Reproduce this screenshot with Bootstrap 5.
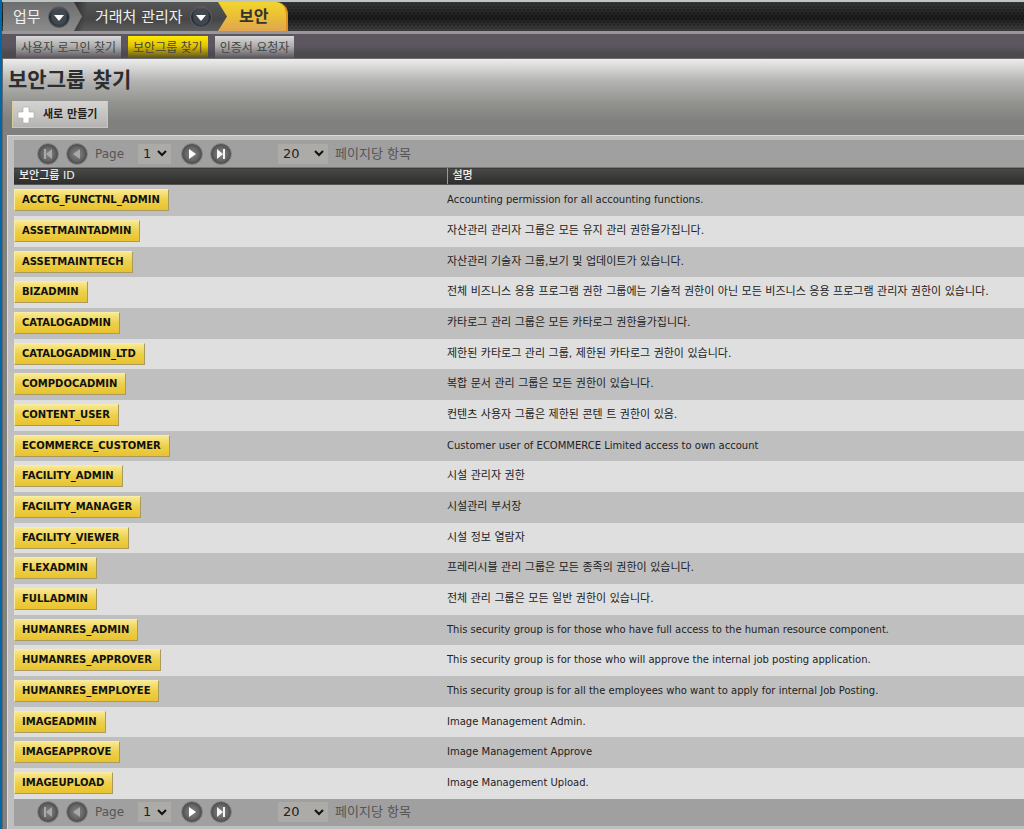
<!DOCTYPE html>
<html lang="ko">
<head>
<meta charset="utf-8">
<meta name="viewport" content="width=device-width, initial-scale=1">
<title>보안그룹 찾기</title>
<link rel="stylesheet" href="https://cdn.jsdelivr.net/npm/bootstrap@5.3.0/dist/css/bootstrap.min.css">
<style>
body{font-family:"DejaVu Sans","Noto Sans CJK KR",sans-serif;font-size:11px;line-height:16px;color:#222;border-left:2px solid #0068a8;background:#80807e}
a{text-decoration:none}
.appbar{height:34px;padding-left:1px;border-top:2px solid #bcc4c4;border-bottom:3px solid #98959b;
 background:linear-gradient(rgba(80,80,80,.4),rgba(10,10,10,.35) 55%,rgba(100,100,100,.4)),radial-gradient(circle at 2px 2px,#161616 1px,transparent 2px) 0 0/4px 6px,radial-gradient(circle at 2px 2px,#161616 1px,transparent 2px) 2px 3px/4px 6px,#333}
.crumb{color:#f0f0f0;font-size:15px;gap:7px;height:29px}
.crumb-home{z-index:3;width:79px;padding-left:10px;background:linear-gradient(#6d6d6d,#8b8b8b);clip-path:polygon(0 0,71px 0,100% 50%,71px 100%,0 100%)}
.crumb-app{z-index:2;margin-left:-8px;width:153px;padding-left:21px;background:linear-gradient(100deg,#2b2b2b,transparent 14px),linear-gradient(#555,#464646 60%,#5c5c5c);clip-path:polygon(0 0,144px 0,100% 50%,144px 100%,0 100%)}
.crumb-now{z-index:1;margin-left:-10px;width:71px;padding-left:22px;font-size:16px;font-weight:700;color:#333;background:linear-gradient(#f2d52e,#e9bc38 55%,#e0a552);border-right:2px solid #e0901c;border-radius:0 12px 0 0}
.crumb-now:hover{color:#333}
.roundbtn{width:22px;height:22px;padding:0;border:0;background:none;line-height:0;flex:none}
.tabstrip{height:25px;padding:2px 0 0 14px;gap:7px;background:linear-gradient(#5e565e,#5c5662 50%,#4d4a4e 80%,#4d4a4e);border-bottom:1px solid #6f6c70;font-family:"Noto Sans CJK KR",sans-serif;font-size:12px;line-height:20px}
.tabstrip a{padding:1px 5px 0;height:22px;color:#444;background:linear-gradient(#d8d8d8,#aaa 50%,#5b565c)}
.tabstrip a.active{background:linear-gradient(#ffea00,#e0c400 45%,#5d541f)}
.stage{background:linear-gradient(#ededed,#b4b4b2 22px,#92928f 44px,#80807e 62px);border-left:1px solid #666}
.stage h1{font-size:21px;line-height:26px;font-weight:700;color:#2d2d2d;padding:8px 0 0 5px;margin:0 0 8px}
.newbtn{margin-left:9px;width:96px;height:27px;border:1px solid #c9c7b8;border-top-color:#e0d690;border-left-color:#d8cf95;background:linear-gradient(#d4d3d1,#b5b4b3);gap:8px;padding:0 0 0 4px;font-weight:700;color:#222;font-size:11px}
.sheet{margin:7px 0 0 4px;padding:4px 0 5px 6px;background:#bfbfbf;border-top:1px solid #dcdcd2;border-left:1px solid #dcdcd2}
.pager{height:27px;padding-left:23px;gap:7px;background:#a0a0a0;color:#555;font-size:12px}
.pager select{appearance:none;height:20px;border:0;border-radius:0;padding:0 5px;font-size:13px;color:#222;background:#adaba8 url("data:image/svg+xml,%3Csvg xmlns='http://www.w3.org/2000/svg' width='10' height='7'%3E%3Cpath d='M1 1l4 4 4-4' fill='none' stroke='%23111' stroke-width='2'/%3E%3C/svg%3E") no-repeat right 4px center}
.pager .sel-page{width:33px;margin:0 3px 0 7px}
.pager .sel-size{width:50px;margin-left:39px}
.per-page{font-size:13px}
.groups{width:100%;table-layout:fixed;border-collapse:collapse}
.groups th{height:17px;padding:0 5px;line-height:14px;font-weight:500;color:#f0f0f0;background:linear-gradient(#494947,#2c2c2b);border-top:1px solid #777;border-bottom:1px solid #555}
.groups th:first-child{width:433px}
.groups th+th{border-left:1px solid #999}
.groups td{height:31px;padding:0}
.groups tbody tr:nth-child(3n) td{height:30px}
.groups tbody tr:nth-child(even){background:#dfdfdf}
.groups td:lang(en){font-size:10px}
.groups td a{display:inline-block;vertical-align:middle;height:22px;line-height:20px;padding:0 8px 0 7px;font-size:10px;font-weight:700;color:#111;background:linear-gradient(#f9e991,#edd04a 50%,#e9c32f);border:1px solid #f7eda5;border-right-color:#a99b60;border-bottom-color:#a99b60}
</style>
</head>
<body>
<svg width="0" height="0" class="position-absolute" aria-hidden="true">
 <radialGradient id="orb"><stop offset="0" stop-color="#858585"/><stop offset=".6" stop-color="#686868"/><stop offset=".9" stop-color="#505050"/><stop offset="1" stop-color="#666"/></radialGradient>
 <linearGradient id="ink" x1="0" y1="0" x2="0" y2="1"><stop offset="0" stop-color="#555a60"/><stop offset=".5" stop-color="#23282e"/><stop offset="1" stop-color="#3b4148"/></linearGradient>
 <symbol id="down" viewBox="0 0 22 22"><circle cx="11" cy="11" r="10.5" fill="url(#ink)" stroke="#5c6064"/><circle cx="11" cy="11" r="8" fill="#41484f"/><path d="M6 9h10l-5 6z" fill="#fff"/></symbol>
 <symbol id="first" viewBox="0 0 22 22"><circle cx="11" cy="11" r="10.5" fill="url(#orb)" stroke="#858585"/><path d="M7 6h2v10H7zM15 6v10l-6-5z" fill="#a9a9a9"/></symbol>
 <symbol id="prev" viewBox="0 0 22 22"><circle cx="11" cy="11" r="10.5" fill="url(#orb)" stroke="#858585"/><path d="M14 6v10l-7-5z" fill="#a9a9a9"/></symbol>
 <symbol id="next" viewBox="0 0 22 22"><circle cx="11" cy="11" r="10.5" fill="url(#orb)" stroke="#858585"/><path d="M8 6v10l7-5z" fill="#fff"/></symbol>
 <symbol id="last" viewBox="0 0 22 22"><circle cx="11" cy="11" r="10.5" fill="url(#orb)" stroke="#858585"/><path d="M7 6v10l6-5zM13 6h2v10h-2z" fill="#f4f4f4"/></symbol>
</svg>
<header>
 <nav class="appbar d-flex" aria-label="경로">
  <div class="crumb crumb-home d-flex align-items-center position-relative"><span>업무</span><button class="roundbtn" aria-label="업무 메뉴"><svg width="22" height="22"><use href="#down"/></svg></button></div>
  <div class="crumb crumb-app d-flex align-items-center position-relative"><span class="text-nowrap">거래처 관리자</span><button class="roundbtn" aria-label="거래처 메뉴"><svg width="22" height="22"><use href="#down"/></svg></button></div>
  <a href="#" class="crumb crumb-now d-flex align-items-center position-relative">보안</a>
 </nav>
 <nav class="tabstrip d-flex" aria-label="보안 메뉴"><a href="#">사용자 로그인 찾기</a><a href="#" class="active">보안그룹 찾기</a><a href="#">인증서 요청자</a></nav>
</header>
<main class="stage">
 <h1>보안그룹 찾기</h1>
 <button class="newbtn d-flex align-items-center"><svg width="18" height="18" viewBox="0 0 18 18"><path d="M6 1h6v5h5v6h-5v5H6v-5H1V6h5z" fill="#fff" stroke="#aaa" stroke-width=".6"/></svg><span>새로 만들기</span></button>
 <section class="sheet">
  <div class="pager d-flex align-items-center">
   <button class="roundbtn" aria-label="처음"><svg width="22" height="22"><use href="#first"/></svg></button>
   <button class="roundbtn" aria-label="이전"><svg width="22" height="22"><use href="#prev"/></svg></button>
   <label for="p1">Page</label><select id="p1" class="sel-page"><option>1</option></select>
   <button class="roundbtn" aria-label="다음"><svg width="22" height="22"><use href="#next"/></svg></button>
   <button class="roundbtn" aria-label="마지막"><svg width="22" height="22"><use href="#last"/></svg></button>
   <select id="n1" class="sel-size"><option>20</option></select><label for="n1" class="per-page">페이지당 항목</label>
  </div>
  <table class="groups">
   <thead><tr><th>보안그룹 ID</th><th>설명</th></tr></thead>
   <tbody>
    <tr><td><a href="#">ACCTG_FUNCTNL_ADMIN</a></td><td lang="en">Accounting permission for all accounting functions.</td></tr>
    <tr><td><a href="#">ASSETMAINTADMIN</a></td><td>자산관리 관리자 그룹은 모든 유지 관리 권한을가집니다.</td></tr>
    <tr><td><a href="#">ASSETMAINTTECH</a></td><td>자산관리 기술자 그룹,보기 및 업데이트가 있습니다.</td></tr>
    <tr><td><a href="#">BIZADMIN</a></td><td>전체 비즈니스 응용 프로그램 권한 그룹에는 기술적 권한이 아닌 모든 비즈니스 응용 프로그램 관리자 권한이 있습니다.</td></tr>
    <tr><td><a href="#">CATALOGADMIN</a></td><td>카타로그 관리 그룹은 모든 카타로그 권한을가집니다.</td></tr>
    <tr><td><a href="#">CATALOGADMIN_LTD</a></td><td>제한된 카타로그 관리 그룹, 제한된 카타로그 권한이 있습니다.</td></tr>
    <tr><td><a href="#">COMPDOCADMIN</a></td><td>복합 문서 관리 그룹은 모든 권한이 있습니다.</td></tr>
    <tr><td><a href="#">CONTENT_USER</a></td><td>컨텐츠 사용자 그룹은 제한된 콘텐 트 권한이 있음.</td></tr>
    <tr><td><a href="#">ECOMMERCE_CUSTOMER</a></td><td lang="en">Customer user of ECOMMERCE Limited access to own account</td></tr>
    <tr><td><a href="#">FACILITY_ADMIN</a></td><td>시설 관리자 권한</td></tr>
    <tr><td><a href="#">FACILITY_MANAGER</a></td><td>시설관리 부서장</td></tr>
    <tr><td><a href="#">FACILITY_VIEWER</a></td><td>시설 정보 열람자</td></tr>
    <tr><td><a href="#">FLEXADMIN</a></td><td>프레리시블 관리 그룹은 모든 종족의 권한이 있습니다.</td></tr>
    <tr><td><a href="#">FULLADMIN</a></td><td>전체 관리 그룹은 모든 일반 권한이 있습니다.</td></tr>
    <tr><td><a href="#">HUMANRES_ADMIN</a></td><td lang="en">This security group is for those who have full access to the human resource component.</td></tr>
    <tr><td><a href="#">HUMANRES_APPROVER</a></td><td lang="en">This security group is for those who will approve the internal job posting application.</td></tr>
    <tr><td><a href="#">HUMANRES_EMPLOYEE</a></td><td lang="en">This security group is for all the employees who want to apply for internal Job Posting.</td></tr>
    <tr><td><a href="#">IMAGEADMIN</a></td><td lang="en">Image Management Admin.</td></tr>
    <tr><td><a href="#">IMAGEAPPROVE</a></td><td lang="en">Image Management Approve</td></tr>
    <tr><td><a href="#">IMAGEUPLOAD</a></td><td lang="en">Image Management Upload.</td></tr>
   </tbody>
  </table>
  <div class="pager d-flex align-items-center">
   <button class="roundbtn" aria-label="처음"><svg width="22" height="22"><use href="#first"/></svg></button>
   <button class="roundbtn" aria-label="이전"><svg width="22" height="22"><use href="#prev"/></svg></button>
   <label for="p2">Page</label><select id="p2" class="sel-page"><option>1</option></select>
   <button class="roundbtn" aria-label="다음"><svg width="22" height="22"><use href="#next"/></svg></button>
   <button class="roundbtn" aria-label="마지막"><svg width="22" height="22"><use href="#last"/></svg></button>
   <select id="n2" class="sel-size"><option>20</option></select><label for="n2" class="per-page">페이지당 항목</label>
  </div>
 </section>
</main>
<script src="https://cdn.jsdelivr.net/npm/bootstrap@5.3.0/dist/js/bootstrap.bundle.min.js"></script>
</body>
</html>
